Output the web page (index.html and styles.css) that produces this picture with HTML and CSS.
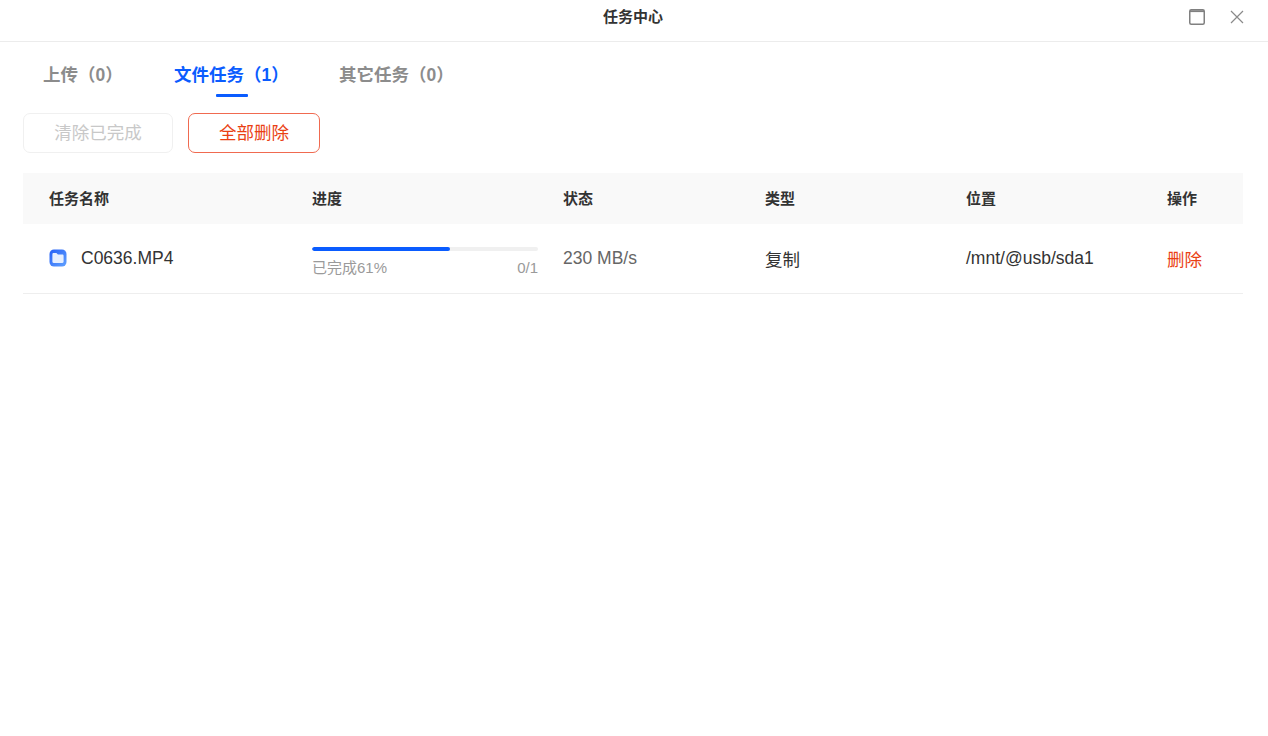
FILE: index.html
```
<!DOCTYPE html>
<html lang="zh">
<head>
<meta charset="utf-8">
<title>任务中心</title>
<link rel="stylesheet" href="styles.css">
</head>
<body>
<div class="app">
  <header class="titlebar">
    <div class="title">任务中心</div>
    <div class="win-actions">
      <svg class="win-icon" width="16" height="16" viewBox="0 0 16 16" fill="none" stroke="#808080"><rect x="0.75" y="0.75" width="14.5" height="14.5" rx="1.5" stroke-width="1.5"/><path d="M1 2.2H15" stroke-width="1.8"/></svg>
      <svg class="win-icon" width="14" height="14" viewBox="0 0 14 14" fill="none" stroke="#8a8a8a" stroke-width="1.2"><path d="M1 1L13 13M13 1L1 13"/></svg>
    </div>
  </header>
  <nav class="tabs">
    <div class="tab tab-upload">上传（0）</div>
    <div class="tab tab-file active">文件任务（1）</div>
    <div class="tab tab-other">其它任务（0）</div>
  </nav>
  <div class="toolbar">
    <button class="btn btn-disabled">清除已完成</button>
    <button class="btn btn-danger">全部删除</button>
  </div>
  <div class="table">
    <div class="row head">
      <div>任务名称</div><div>进度</div><div>状态</div><div>类型</div><div>位置</div><div>操作</div>
    </div>
    <div class="row body">
      <div class="name">
        <svg width="18" height="18" viewBox="0 0 18 18"><defs><linearGradient id="g" x1="0" y1="0" x2="1" y2="1"><stop offset="0" stop-color="#2560f6"/><stop offset="1" stop-color="#62a2ff"/></linearGradient></defs><rect x="0.5" y="0.5" width="17" height="17" rx="4.5" fill="url(#g)"/><path d="M3.4 5.2C3.4 4.5 3.9 4 4.6 4H7.4L8.9 5.5H13.4C14.1 5.5 14.6 6 14.6 6.7V12.8C14.6 13.5 14.1 14 13.4 14H4.6C3.9 14 3.4 13.5 3.4 12.8Z" fill="#e6efff"/></svg>
        <span>C0636.MP4</span>
      </div>
      <div class="progress">
        <div class="track"><div class="fill" style="width:61%"></div></div>
        <div class="progress-text"><span>已完成61%</span><span class="count">0/1</span></div>
      </div>
      <div class="status">230 MB/s</div>
      <div class="type">复制</div>
      <div class="path">/mnt/@usb/sda1</div>
      <div class="op">删除</div>
    </div>
  </div>
</div>
</body>
</html>
```
FILE: styles.css
```
* { box-sizing: border-box; }
html, body { margin: 0; padding: 0; height: 100%; background: #fff; }
body { font-family: "Liberation Sans", "Noto Sans CJK SC", sans-serif; color: #333; overflow: hidden; }
.app { width: 1268px; height: 736px; display: flex; flex-direction: column; }
.titlebar { height: 42px; border-bottom: 1px solid #ececec; display: grid; grid-template-columns: 1fr auto 1fr; align-items: center; padding-bottom: 7px; }
.title { grid-column: 2; font-size: 15px; font-weight: 700; color: #333; line-height: 20px; padding-right: 2px; }
.win-actions { grid-column: 3; justify-self: end; display: flex; align-items: center; gap: 25px; padding-right: 24px; }
.win-icon { display: block; }
.tabs { height: 55px; display: flex; padding-left: 43px; }
.tab { position: relative; font-size: 17.5px; font-weight: 700; color: #8c8c8c; line-height: 24px; padding-top: 21px; }
.tab-upload { width: 131px; }
.tab-file { width: 165px; }
.tab.active { color: #0a5cff; }
.tab.active::after { content: ""; position: absolute; left: 42px; top: 52px; width: 32px; height: 3px; background: #0a5cff; border-radius: 1px; }
.toolbar { display: flex; gap: 15px; padding: 16px 0 0 23px; height: 76px; }
.btn { height: 40px; border-radius: 7px; background: #fff; font: 400 17.5px/1 "Liberation Sans", "Noto Sans CJK SC", sans-serif; padding: 2px 0 0; }
.btn-disabled { width: 150px; border: 1px solid #f0f0f0; color: #c8c8c8; }
.btn-danger { width: 132px; border: 1px solid #f06a50; color: #ea3f14; }
.table { margin: 0 25px 0 23px; }
.row { display: grid; grid-template-columns: 263px 251px 202px 201px 201px 1fr; padding-left: 26px; align-items: center; }
.head { height: 51px; background: #f9f9f9; font-size: 15px; font-weight: 700; color: #333; padding-bottom: 3px; }
.body { height: 70px; border-bottom: 1px solid #eeeeee; font-size: 17.5px; }
.name { display: flex; align-items: center; gap: 14px; color: #333; margin-top: -1px; }
.name svg { display: block; flex: none; }
.progress { width: 226px; margin-top: 8px; }
.track { height: 4px; border-radius: 2px; background: #f0f0f0; overflow: hidden; }
.fill { height: 100%; background: #0a5cff; border-radius: 2px; }
.progress-text { display: flex; justify-content: space-between; font-size: 15px; color: #9a9a9a; line-height: 20px; margin-top: 7px; }
.status { color: #666; margin-top: -1px; }
.type { color: #333; }
.path { color: #333; margin-top: -1px; }
.op { color: #ea3f14; }
```
